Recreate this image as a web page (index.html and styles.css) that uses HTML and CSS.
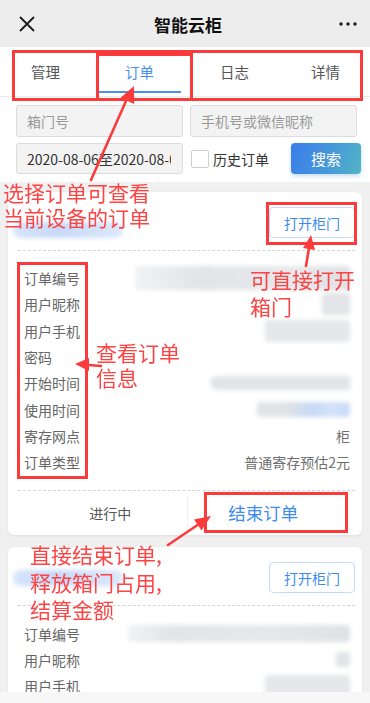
FILE: index.html
```html
<!DOCTYPE html>
<html lang="zh-CN">
<head>
<meta charset="utf-8">
<title>智能云柜</title>
<link rel="stylesheet" href="styles.css">
</head>
<body>
<header class="nav">
  <svg class="nav-close" width="16" height="16" viewBox="0 0 16 16"><path d="M1 1L15 15M15 1L1 15" stroke="#1a1a1a" stroke-width="1.8" fill="none"/></svg>
  <div class="nav-title">智能云柜</div>
  <svg class="nav-more" width="18" height="4" viewBox="0 0 18 4"><circle cx="2" cy="2" r="1.7" fill="#1a1a1a"/><circle cx="9" cy="2" r="1.7" fill="#1a1a1a"/><circle cx="16" cy="2" r="1.7" fill="#1a1a1a"/></svg>
</header>

<nav class="tabs">
  <div class="tab"><span>管理</span></div>
  <div class="tab active"><span>订单</span><i class="tab-line"></i></div>
  <div class="tab"><span>日志</span></div>
  <div class="tab"><span>详情</span></div>
</nav>

<section class="search">
  <input class="field" type="text" placeholder="箱门号">
  <input class="field" type="text" placeholder="手机号或微信昵称">
  <input class="field field-date" type="text" value="2020-08-06至2020-08-06">
  <div class="search-side">
    <span class="check"></span>
    <span class="check-label">历史订单</span>
    <button class="search-btn">搜索</button>
  </div>
</section>

<main class="list">
  <article class="card">
    <div class="card-head">
      <span class="pill pill-low"></span>
      <button class="open-btn">打开柜门</button>
    </div>
    <div class="card-body">
      <div class="row"><span class="label">订单编号</span><span class="blur b-long"></span></div>
      <div class="row"><span class="label">用户昵称</span><span class="blur b-tiny"></span></div>
      <div class="row"><span class="label">用户手机</span><span class="blur b-mid"></span></div>
      <div class="row"><span class="label">密码</span><span></span></div>
      <div class="row"><span class="label">开始时间</span><span class="blur b-time"></span></div>
      <div class="row"><span class="label">使用时间</span><span class="blur b-use"></span></div>
      <div class="row"><span class="label">寄存网点</span><span class="value">柜</span></div>
      <div class="row"><span class="label">订单类型</span><span class="value">普通寄存预估2元</span></div>
    </div>
    <div class="card-foot">
      <div class="foot-state">进行中</div>
      <div class="foot-end">结束订单</div>
    </div>
  </article>

  <article class="card">
    <div class="card-head">
      <span class="pill"></span>
      <button class="open-btn">打开柜门</button>
    </div>
    <div class="card-body">
      <div class="row"><span class="label">订单编号</span><span class="blur b-long2"></span></div>
      <div class="row"><span class="label">用户昵称</span><span class="blur b-tiny2"></span></div>
      <div class="row"><span class="label">用户手机</span><span class="blur b-mid"></span></div>
      <div class="row"><span class="label">密码</span><span></span></div>
    </div>
  </article>
</main>

<div class="bottom-bar"></div>

<div class="annot">
  <div class="rbox box-tabs"></div>
  <div class="rbox box-tab-order"></div>
  <div class="rbox box-open"></div>
  <div class="rbox box-labels"></div>
  <div class="rbox box-end"></div>

  <div class="note note-1">选择订单可查看<br>当前设备的订单</div>
  <div class="note note-2">可直接打开<br>箱门</div>
  <div class="note note-3">查看订单<br>信息</div>
  <div class="note note-4">直接结束订单,<br>释放箱门占用,<br>结算金额</div>

  <svg class="arrows" width="370" height="703" viewBox="0 0 370 703">
    <g fill="#fb3b3b" stroke="#fb3b3b" stroke-linecap="round">
      <line x1="91" y1="180" x2="126" y2="101" stroke-width="2.6"/>
      <polygon points="134,86 134.2,104 120.6,97.8" stroke="none"/>
      <line x1="306" y1="266" x2="309" y2="248" stroke-width="2.6"/>
      <polygon points="311,235 315,250 303,248" stroke="none"/>
      <line x1="101" y1="366" x2="88" y2="365" stroke-width="2.6"/>
      <polygon points="75,364 89,358 89,371" stroke="none"/>
      <line x1="168" y1="545" x2="199" y2="524" stroke-width="2.6"/>
      <polygon points="211,516 201.5,530.5 194,519.5" stroke="none"/>
    </g>
  </svg>
</div>
</body>
</html>
```

FILE: styles.css
```css
html, body {
  margin: 0;
  padding: 0;
  width: 370px;
  height: 703px;
  overflow: hidden;
}

body {
  position: relative;
  background: #f0f0f0;
  font-family: "Noto Sans CJK SC", "Noto Sans", sans-serif;
  color: #333;
}

/* ---------- nav bar ---------- */
.nav {
  height: 47px;
  background: #ededed;
  display: grid;
  grid-template-columns: 1fr auto 1fr;
  align-items: center;
  padding: 0 13px 0 19px;
  box-sizing: border-box;
}
.nav-close { display: block; }
.nav-title {
  font-size: 17px;
  font-weight: 700;
  color: #111;
  line-height: 20px;
  padding-top: 2px;
}
.nav-more { justify-self: end; display: block; }

/* ---------- tabs ---------- */
.tabs {
  display: grid;
  grid-template-columns: 91px 97px 93px 89px;
  height: 49px;
  background: #fff;
  border-bottom: 1px solid #ececec;
}
.tab {
  display: flex;
  flex-direction: column;
  align-items: center;
  padding-top: 15px;
  font-size: 14.5px;
  line-height: 20px;
  color: #555;
}
.tab.active { color: #4a8ff0; }
.tab-line {
  display: block;
  width: 83px;
  height: 2px;
  margin-top: 9px;
  background: #4a8ff0;
}

/* ---------- search ---------- */
.search {
  display: grid;
  grid-template-columns: 167px 167px;
  column-gap: 7px;
  row-gap: 6px;
  padding: 8px 13px 8px 16px;
  background: #fff;
}
.field {
  box-sizing: border-box;
  width: 100%;
  height: 32px;
  margin: 0;
  border: 1px solid #dcdcdc;
  border-radius: 3px;
  background: #f3f3f3;
  padding: 0 10px 0 10px;
  font-family: inherit;
  font-size: 14px;
  color: #333;
  outline: none;
}
.field::placeholder { color: #9a9a9a; }
.field-date { height: 31px; padding-right: 11px; }
.search-side {
  display: flex;
  align-items: center;
  margin-right: -4px;
}
.check {
  box-sizing: border-box;
  width: 18px;
  height: 18px;
  margin-left: 1px;
  border: 1px solid #cfcfcf;
  border-radius: 2px;
  background: #fff;
}
.check-label {
  margin-left: 4px;
  font-size: 14px;
  color: #333;
}
.search-btn {
  margin-left: auto;
  width: 70px;
  height: 31px;
  border: none;
  border-radius: 4px;
  background: linear-gradient(110deg, #3a7ce9 0%, #4596dc 50%, #52b4c4 100%);
  box-shadow: 0 2px 4px rgba(60, 130, 220, 0.3);
  color: #fff;
  font-family: inherit;
  font-size: 15px;
  padding: 0;
}

/* ---------- list ---------- */
.list {
  padding: 10px 8px 0;
}
.card {
  background: #fff;
  border-radius: 6px;
  box-shadow: 0 1px 3px rgba(0, 0, 0, 0.07);
  padding: 0 7px 0 10px;
  margin-bottom: 12px;
}
.card-head {
  display: flex;
  align-items: center;
  justify-content: space-between;
  padding: 15px 0 12px;
  border-bottom: 1px dashed #d4d4d4;
}
.pill {
  display: block;
  width: 110px;
  height: 16px;
  margin-left: -5px;
  border-radius: 8px;
  background: linear-gradient(90deg, #d6e4fb, #c7daf8 40%, #dce8fb);
  filter: blur(2px);
}
.pill-low { margin-top: 14px; }
.open-btn {
  width: 86px;
  height: 31px;
  padding: 0;
  border: 1px solid #c6dbf7;
  border-radius: 4px;
  background: #fff;
  color: #3d8bef;
  font-family: inherit;
  font-size: 14px;
}
.card-body {
  padding: 14px 5px 15px 6px;
  border-bottom: 1px dashed #d4d4d4;
}
.card:last-child .card-body { border-bottom: none; }
.row {
  height: 26.3px;
  display: flex;
  align-items: center;
  justify-content: space-between;
  font-size: 14px;
}
.label { color: #666; }
.value { color: #6f6f6f; }

.blur {
  display: block;
  height: 18px;
  background: #e2e4e8;
  border-radius: 3px;
  filter: blur(2px);
}
.b-long  { width: 215px; height: 24px; background: linear-gradient(90deg, #f1f2f4, #e2e4e8 30%, #e6e8eb 70%, #dfe1e5); }
.b-long2 { width: 222px; height: 17px; background: linear-gradient(90deg, #f1f2f4, #e2e4e8 20%, #e7e8eb 60%, #dfe1e5); }
.b-tiny  { width: 28px; height: 22px; }
.b-tiny2 { width: 14px; height: 15px; }
.b-mid   { width: 85px; height: 22px; background: #e6e7ea; }
.b-time  { width: 140px; height: 14px; border-radius: 7px 0 0 7px; }
.b-use   { width: 93px; height: 15px; background: linear-gradient(90deg, #e1e3e7 30%, #c6d9f6 60%, #d4e3fa 80%, #c9dbf7); }

.card-foot {
  height: 44px;
  display: grid;
  grid-template-columns: 1fr 1fr;
  align-items: center;
}
.foot-state {
  padding-left: 16px;
  text-align: center;
  font-size: 14px;
  color: #555;
}
.foot-end {
  height: 34px;
  line-height: 34px;
  padding-right: 16px;
  border-left: 1px solid #efefef;
  text-align: center;
  font-size: 17.5px;
  color: #3d8bef;
}

.bottom-bar {
  position: fixed;
  left: 0;
  right: 0;
  bottom: 0;
  height: 11px;
  background: #f7f7f7;
}

/* ---------- annotations overlay ---------- */
.annot {
  position: absolute;
  left: 0;
  top: 0;
  width: 370px;
  height: 703px;
  pointer-events: none;
}
.arrows {
  position: absolute;
  left: 0;
  top: 0;
}
.rbox {
  position: absolute;
  box-sizing: border-box;
  border: 3px solid #fb3b3b;
}
.box-tabs      { left: 12px;  top: 50px;  width: 351px; height: 51px; }
.box-tab-order { left: 96px;  top: 53px;  width: 97px;  height: 48px; }
.box-open      { left: 266px; top: 202px; width: 91px;  height: 43px; }
.box-labels    { left: 17px;  top: 262px; width: 71px;  height: 217px; }
.box-end       { left: 204px; top: 492px; width: 144px; height: 41px; }

.note {
  position: absolute;
  color: #fc4444;
  font-size: 21px;
  white-space: nowrap;
}
.note-1 { left: 3px;   top: 180px; line-height: 25px; }
.note-2 { left: 250px; top: 266px; line-height: 27px; }
.note-3 { left: 96px;  top: 340px; line-height: 25px; }
.note-4 { left: 30px;  top: 541px; line-height: 27.5px; }
```
